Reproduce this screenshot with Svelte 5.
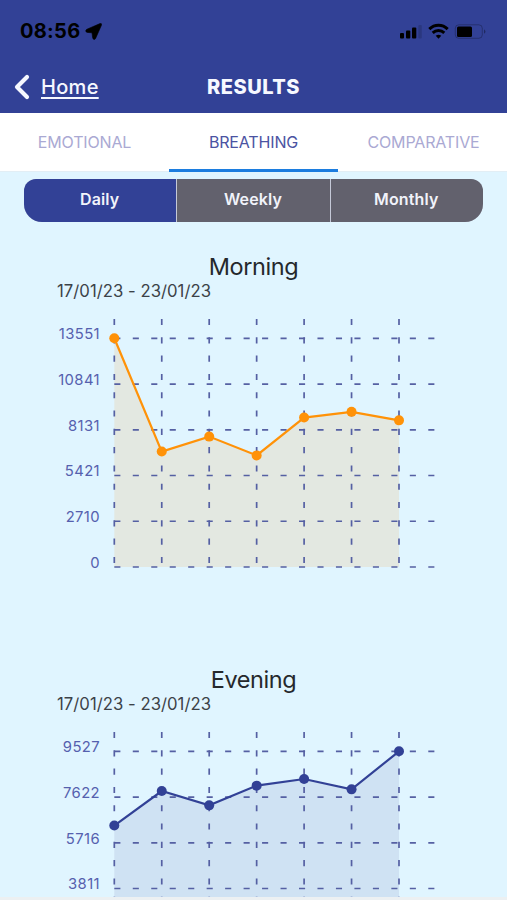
<style>
    :global(body) {
        margin: 0;
        overflow: hidden;
        background: #e0f5ff;
    }
    .app {
        display: flex;
        flex-direction: column;
        width: 507px;
        height: 900px;
        overflow: hidden;
        background: #e0f5ff;
        font-family: Inter, 'Liberation Sans', sans-serif;
    }
    header {
        flex: none;
        height: 113px;
        background: #324196;
    }
    .status {
        display: flex;
        align-items: center;
        justify-content: space-between;
        height: 62px;
        padding: 0 20px;
    }
    .clock {
        display: flex;
        align-items: center;
        gap: 5px;
        font-size: 20px;
        font-weight: 700;
        letter-spacing: 0.3px;
        color: #000;
    }
    .status svg,
    .nav svg {
        display: block;
    }
    .nav {
        display: grid;
        grid-template-columns: 1fr auto 1fr;
        align-items: center;
        height: 50px;
        padding: 0 13px;
        color: #f6f8ff;
    }
    .back {
        display: flex;
        align-items: center;
        gap: 10px;
        font-size: 20px;
        font-weight: 500;
        letter-spacing: 0.3px;
        color: inherit;
    }
    .back span {
        text-decoration: underline;
        text-decoration-thickness: 1.5px;
        text-underline-offset: 3px;
    }
    h1 {
        margin: 0;
        font-size: 20px;
        font-weight: 800;
        letter-spacing: 0.5px;
    }
    .tabs {
        display: grid;
        flex: none;
        grid-template-columns: repeat(3, 1fr);
        height: 58px;
        background: #fff;
        border-bottom: 1px solid #e2eef5;
    }
    .tab {
        display: flex;
        align-items: center;
        justify-content: center;
        box-sizing: border-box;
        height: 59px;
        padding: 1px 0 0;
        border: 0;
        border-bottom: 3px solid transparent;
        background: none;
        font: 400 16px Inter, sans-serif;
        letter-spacing: -0.15px;
        color: #aaa9d3;
    }
    .tab:last-child {
        padding-left: 2px;
    }
    .tab.active {
        border-color: #1c7ddf;
        color: #4b53a2;
    }
    .periods {
        display: grid;
        flex: none;
        grid-template-columns: repeat(3, 1fr);
        gap: 1px;
        width: 459px;
        height: 43px;
        margin: 7px auto 0;
        overflow: hidden;
        border-radius: 12px 12px 18px 18px;
        background: #c5c9d8;
    }
    .periods button {
        padding: 0 1px 4px 0;
        border: 0;
        background: #62616d;
        font: 600 16px Inter, sans-serif;
        letter-spacing: 0.15px;
        color: #f1f3fa;
    }
    .periods button.active {
        background: #324196;
    }
    .charts {
        flex: 1;
        min-height: 0;
        padding-top: 29px;
        overflow: hidden;
    }
    section {
        height: 412.5px;
    }
    h2 {
        margin: 0;
        font-size: 23.5px;
        font-weight: 400;
        line-height: 31px;
        letter-spacing: -0.4px;
        text-align: center;
        color: #25282c;
    }
    .range {
        margin: 0 0 0 57px;
        font-size: 16.7px;
        line-height: 19px;
        letter-spacing: 0.03px;
        color: #3c4248;
    }
    .plot {
        display: block;
        margin-top: 9px;
    }
    .grid {
        stroke: #5560a3;
        stroke-width: 1.7;
    }
    .across {
        stroke-dasharray: 6.1 12.37;
    }
    .down {
        stroke-dasharray: 6.1 12.2;
    }
    .label {
        fill: #5560ae;
        font-size: 14.8px;
        letter-spacing: 0.4px;
        text-anchor: end;
    }
    .footer {
        flex: none;
        height: 3px;
        background: #ecf0f2;
    }
</style>

<script>
    const tabs = ['EMOTIONAL', 'BREATHING', 'COMPARATIVE']
    const periods = ['Daily', 'Weekly', 'Monthly']
    let tab = 'BREATHING'
    let period = 'Daily'

    const charts = [
        {
            title: 'Morning',
            color: '#ff9208',
            fill: '#e3e8e1',
            ticks: [13551, 10841, 8131, 5421, 2710, 0],
            values: [13551, 6840, 7727, 6612, 8854, 9192, 8688]
        },
        {
            title: 'Evening',
            color: '#324196',
            fill: '#cfe2f3',
            ticks: [9527, 7622, 5716, 3811],
            values: [6433, 7871, 7275, 8097, 8372, 7942, 9527]
        }
    ]

    const left = 114.3
    const top = 28.3
    const bottom = 257
    const x = i => left + i * 47.45
    const y = (value, max) => bottom - (value / max) * (bottom - top)
    const points = chart => chart.values.map((v, i) => `${x(i)},${y(v, chart.ticks[0])}`).join(' ')
</script>

<div class="app">
    <header>
        <div class="status">
            <div class="clock">
                <span>08:56</span>
                <svg width="17" height="17" viewBox="0 0 17 17">
                    <path d="M15 .6 2 6.2C.2 7 .5 9.2 2.3 9.4L7 9.8 7.6 14.6C7.9 16.8 9.9 17 10.6 15.4L16.5 2.1C16.9.9 16.2.1 15 .6Z" stroke="#000" stroke-width=".6" />
                </svg>
            </div>
            <svg width="89" height="18" viewBox="0 0 89 18">
                <rect x="2" y="11" width="4" height="5.5" rx="1" />
                <rect x="8" y="8.5" width="4.3" height="8" rx="1" />
                <rect x="14" y="5.5" width="4.3" height="11" rx="1" />
                <rect x="20.3" y="3" width="3.5" height="13.5" rx="1" opacity=".15" />
                <g fill="none" stroke="#000" stroke-width="2.9">
                    <path d="M31.3 7.1C36.5 1.9 44.5 1.9 49.7 7.1" />
                    <path d="M34.7 10.9C38 7.7 43 7.7 46.3 10.9" />
                </g>
                <path d="M37.7 13.8Q40.5 11.5 43.3 13.8L40.5 16.8Z" />
                <rect x="57.3" y="2.8" width="27" height="13.5" rx="3.5" fill="none" stroke="#000" opacity=".25" />
                <rect x="59" y="4.5" width="15" height="10.5" rx="1.5" />
                <path d="M86 7.2Q89 9.5 86 11.8Z" opacity=".35" />
            </svg>
        </div>
        <div class="nav">
            <div class="back">
                <svg width="18" height="26" viewBox="0 0 18 26">
                    <path d="M14 3 4 13 14 23" fill="none" stroke="#f6f8ff" stroke-width="4.2" stroke-linecap="round" stroke-linejoin="round" />
                </svg>
                <span>Home</span>
            </div>
            <h1>RESULTS</h1>
        </div>
    </header>

    <nav class="tabs">
        {#each tabs as name}
            <button class="tab" class:active={name === tab} on:click={() => (tab = name)}>{name}</button>
        {/each}
    </nav>

    <div class="periods">
        {#each periods as name}
            <button class:active={name === period} on:click={() => (period = name)}>{name}</button>
        {/each}
    </div>

    <div class="charts">
        {#each charts as chart}
            <section>
                <h2>{chart.title}</h2>
                <p class="range">17/01/23 - 23/01/23</p>
                <svg class="plot" width="507" height="270">
                    <polygon points="{left},{bottom} {points(chart)} {x(6)},{bottom}" fill={chart.fill} />
                    <g class="grid">
                        {#each chart.ticks as tick, i}
                            <line class="across" x1={left} x2="435" y1={top + i * 45.74} y2={top + i * 45.74} />
                        {/each}
                        {#each chart.values as value, i}
                            <line class="down" x1={x(i)} x2={x(i)} y1="9" y2={bottom} />
                        {/each}
                    </g>
                    <polyline points={points(chart)} fill="none" stroke={chart.color} stroke-width="2.2" />
                    {#each chart.values as value, i}
                        <circle cx={x(i)} cy={y(value, chart.ticks[0])} r="5" fill={chart.color} />
                    {/each}
                    {#each chart.ticks as tick, i}
                        <text class="label" x="100" y={top + 0.9 + i * 45.74}>{tick}</text>
                    {/each}
                </svg>
            </section>
        {/each}
    </div>
    <div class="footer"></div>
</div>
